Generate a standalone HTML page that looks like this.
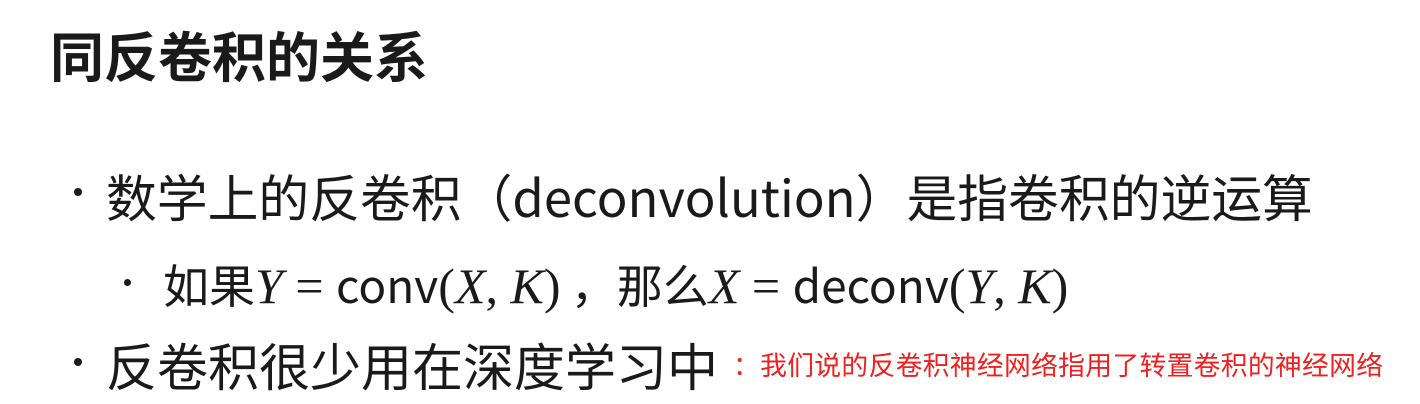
<!DOCTYPE html>
<html><head><meta charset="utf-8"><style>
body{margin:0;width:1420px;height:404px;background:#fff;position:relative;overflow:hidden;font-family:"Liberation Sans","Noto Sans CJK SC",sans-serif;color:#1a1a1a}
.t{position:absolute;white-space:nowrap;line-height:1}
.m{font-family:"Liberation Serif",serif;font-style:italic;font-size:50px}
.r{font-family:"Liberation Serif",serif;font-size:50px}
.b{position:absolute;width:8px;height:8px;border-radius:50%;background:#1a1a1a}
</style></head><body>
<div class="t" style="left:50px;top:27px;font-size:54px;font-weight:bold;font-family:'Noto Sans CJK SC',sans-serif">同反卷积的关系</div>
<div class="b" style="left:74px;top:188px"></div>
<div class="t" style="left:106px;top:170px;font-size:50.8px;font-family:'Noto Sans CJK SC',sans-serif">数学上的反卷积（deconvolution）是指卷积的逆运算</div>
<div class="b" style="left:124px;top:279px;width:7px;height:7px"></div>
<div class="t" style="left:163px;top:261px;font-size:46px;font-family:'Noto Sans CJK SC',sans-serif">如果<span class="m">Y</span><span class="r"> = </span>conv<span class="r">(</span><span class="m">X</span><span class="r">, </span><span class="m">K</span><span class="r">)</span> ，那么<span class="m">X</span><span class="r"> = </span>deconv<span class="r">(</span><span class="m">Y</span><span class="r">, </span><span class="m">K</span><span class="r">)</span></div>
<div class="b" style="left:74px;top:358px"></div>
<div class="t" style="left:106px;top:339px;font-size:51px;font-family:'Noto Sans CJK SC',sans-serif">反卷积很少用在深度学习中</div>
<div class="t" style="left:733px;top:351px;font-size:26.8px;color:#f02020;font-family:'Noto Sans CJK SC',sans-serif;letter-spacing:0.3px">：我们说的反卷积神经网络指用了转置卷积的神经网络</div>
</body></html>
